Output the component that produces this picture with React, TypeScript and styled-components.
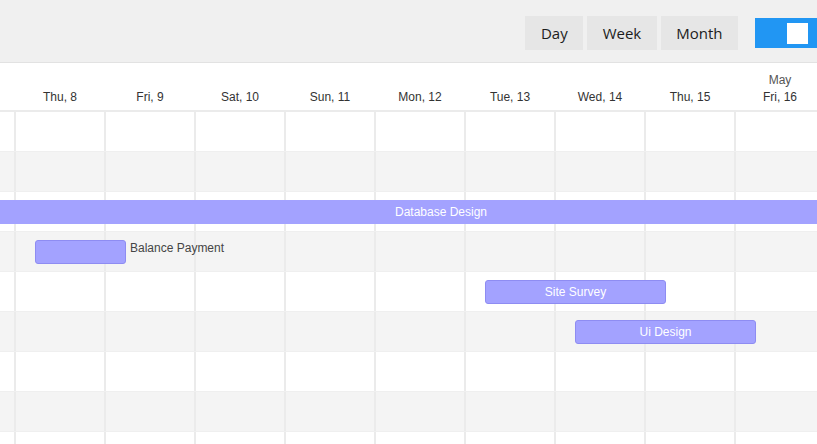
import React from "react";
import styled, { createGlobalStyle } from "styled-components";

const Global = createGlobalStyle`
  html, body { margin: 0; padding: 0; background: #fff; overflow: hidden; }
  body { font-family: "Liberation Sans", Arial, sans-serif; }
`;

const COL = 90;
const OFFSET = -76;

const Page = styled.div`
  width: 817px;
  height: 444px;
  overflow: hidden;
  display: flex;
  flex-direction: column;
`;

const Toolbar = styled.div`
  flex: none;
  height: 63px;
  background: #f0f0f0;
  border-bottom: 1px solid #e2e2e2;
  display: flex;
  align-items: flex-start;
  justify-content: flex-end;
  padding-top: 16px;
  box-sizing: border-box;
`;

const ButtonGroup = styled.div`
  display: flex;
  gap: 4px;
  margin-right: 17px;
`;

const ViewButton = styled.button`
  height: 34px;
  padding: 0 15.5px;
  border: none;
  background: #e6e6e6;
  color: #1c1c1c;
  font-family: "Open Sans", sans-serif;
  font-size: 15px;
  cursor: pointer;
`;

const Toggle = styled.div`
  margin-top: 2px;
  width: 62px;
  height: 30px;
  background: #2196f3;
  display: flex;
  align-items: center;
  justify-content: flex-end;
  padding-right: 9px;
  box-sizing: border-box;
`;

const Knob = styled.div`
  width: 21px;
  height: 21px;
  background: #fff;
`;

const Viewport = styled.div`
  flex: 1;
  overflow: hidden;
`;

const Timeline = styled.div`
  margin-left: ${OFFSET}px;
  width: ${COL * 10}px;
`;

const Header = styled.div`
  height: 49px;
  display: grid;
  grid-template-columns: repeat(10, ${COL}px);
  border-bottom: 2px solid #ebebeb;
  box-sizing: border-box;
`;

const HeaderCell = styled.div`
  display: flex;
  flex-direction: column;
  justify-content: flex-end;
  align-items: center;
  padding-bottom: 4px;
  padding-left: 2px;
  font-size: 12px;
  color: #333;
  line-height: 17px;
`;

const Month = styled.span`
  color: #555;
`;

const Row = styled.div<{ $striped: boolean }>`
  position: relative;
  height: 40px;
  display: grid;
  grid-template-columns: repeat(10, ${COL}px);
  background: ${(p) => (p.$striped ? "#f4f4f4" : "#fff")};
  border-bottom: 1px solid #efefef;
  box-sizing: border-box;
`;

const Cell = styled.div`
  border-left: 2px solid #ebebeb;
`;

const Bar = styled.div<{ $full?: boolean }>`
  position: absolute;
  top: 8px;
  height: 24px;
  box-sizing: border-box;
  background: #a3a2ff;
  border: 1px solid ${(p) => (p.$full ? "#a3a2ff" : "#8e8cf2")};
  border-radius: ${(p) => (p.$full ? "0" : "3px")};
  color: #fff;
  font-size: 12px;
  line-height: 22px;
  text-align: center;
  white-space: nowrap;
`;

const SideLabel = styled.span`
  position: absolute;
  top: 8px;
  line-height: 17px;
  font-size: 12px;
  color: #454545;
  white-space: nowrap;
`;

const days = [
  "",
  "Thu, 8",
  "Fri, 9",
  "Sat, 10",
  "Sun, 11",
  "Mon, 12",
  "Tue, 13",
  "Wed, 14",
  "Thu, 15",
  "Fri, 16",
];

type Task = { name: string; start?: number; days?: number; full?: boolean; outside?: boolean };

const rows: (Task | null)[] = [
  null,
  null,
  { name: "Database Design", full: true },
  { name: "Balance Payment", start: 1, days: 1, outside: true },
  { name: "Site Survey", start: 6, days: 2 },
  { name: "Ui Design", start: 7, days: 2 },
  null,
  null,
  null,
];

export default function App() {
  return (
    <Page>
      <Global />
      <Toolbar>
        <ButtonGroup>
          <ViewButton>Day</ViewButton>
          <ViewButton>Week</ViewButton>
          <ViewButton>Month</ViewButton>
        </ButtonGroup>
        <Toggle>
          <Knob />
        </Toggle>
      </Toolbar>
      <Viewport>
        <Timeline>
          <Header>
            {days.map((d, i) => (
              <HeaderCell key={i}>
                {i === 9 && <Month>May</Month>}
                <span>{d}</span>
              </HeaderCell>
            ))}
          </Header>
          {rows.map((t, r) => (
            <Row key={r} $striped={r % 2 === 1}>
              {days.map((_, i) => (
                <Cell key={i} />
              ))}
              {t && t.full && (
                <Bar $full style={{ left: 0, width: 2 * (441 - OFFSET) }}>
                  {t.name}
                </Bar>
              )}
              {t && !t.full && (
                <>
                  <Bar
                    style={{
                      left: (t.start ?? 0) * COL + 21,
                      width: (t.days ?? 1) * COL + 1,
                    }}
                  >
                    {t.outside ? "" : t.name}
                  </Bar>
                  {t.outside && (
                    <SideLabel
                      style={{ left: ((t.start ?? 0) + (t.days ?? 1)) * COL + 26 }}
                    >
                      {t.name}
                    </SideLabel>
                  )}
                </>
              )}
            </Row>
          ))}
        </Timeline>
      </Viewport>
    </Page>
  );
}
